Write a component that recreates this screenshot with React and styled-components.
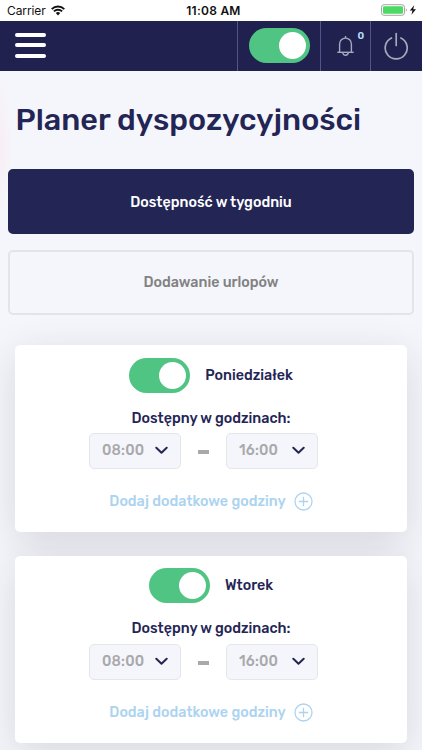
import React from 'react';
import styled, { createGlobalStyle } from 'styled-components';

const GlobalStyle = createGlobalStyle`
    * {
        box-sizing: border-box;
    }
    body {
        margin: 0;
        background: #f5f6fb;
        font-family: Rubik, Roboto, sans-serif;
        font-size: 14.3px;
        font-weight: 500;
        color: #232555;
    }
    button {
        font: inherit;
        padding: 0;
        border: none;
        background: none;
    }`;

const Page = styled.div`
    height: 750px;
    overflow: hidden;
    background: radial-gradient(ellipse 12px 75px at 0 146px, #f8eef4, #f5f6fb);`;

const StatusBar = styled.div`
    display: grid;
    grid-template-columns: 1fr auto 1fr;
    align-items: center;
    height: 20.5px;
    padding: 0 5px 0 7px;
    background: white;
    color: #111;
    font-family: Inter, sans-serif;
    font-size: 12px;
    font-weight: 400;`;

const Carrier = styled.div`
    display: flex;
    align-items: center;
    gap: 5px;
    letter-spacing: -0.1px;`;

const Clock = styled.div`
    padding-left: 3px;
    font-weight: 600;
    letter-spacing: 0.25px;`;

const Power = styled.div`
    display: flex;
    align-items: center;
    justify-content: flex-end;`;

const Header = styled.header`
    display: flex;
    height: 50.8px;
    background: #20214f;`;

const MenuButton = styled.button`
    display: flex;
    flex-direction: column;
    justify-content: space-between;
    width: 31px;
    height: 24.5px;
    margin: 12.5px auto 0 15.4px;`;

const MenuLine = styled.span`
    height: 3.6px;
    border-radius: 2px;
    background: white;`;

const HeaderCell = styled.div`
    display: flex;
    align-items: center;
    justify-content: center;
    width: ${props => props.$width}px;
    border-left: 1px solid #53548a;`;

const Bell = styled.div`
    position: relative;
    height: 22px;`;

const Badge = styled.span`
    position: absolute;
    top: -5px;
    left: 21px;
    color: #b5dcf8;
    font-size: 10px;
    font-weight: 600;
    line-height: 12px;`;

const Switch = styled.button`
    display: flex;
    align-items: center;
    justify-content: flex-end;
    width: 61px;
    height: 35px;
    padding-right: 4px;
    border-radius: 18px;
    background: #50c583;`;

const Knob = styled.span`
    width: 27px;
    height: 27px;
    border-radius: 50%;
    background: white;`;

const Title = styled.h1`
    margin: 29.7px 0 0 15.5px;
    font-size: 30.6px;
    font-weight: 500;
    line-height: 38px;
    white-space: nowrap;`;

const Tabs = styled.div`
    display: flex;
    flex-direction: column;
    gap: 15.5px;
    padding: 30.2px 8px 0;`;

const Tab = styled.button`
    height: 65px;
    padding-top: 1px;
    border-radius: 5px;
    border: 2px solid ${props => props.$active ? '#232555' : '#e3e4e8'};
    background: ${props => props.$active ? '#232555' : 'transparent'};
    color: ${props => props.$active ? 'white' : '#818181'};`;

const Days = styled.div`
    display: flex;
    flex-direction: column;
    gap: 24px;
    padding: 30.6px 15.4px 0;`;

const Card = styled.section`
    display: flex;
    flex-direction: column;
    align-items: center;
    height: 186.7px;
    padding-top: 12.4px;
    border-radius: 5px;
    background: white;
    box-shadow: 0 10px 40px rgba(35, 37, 45, 0.14);`;

const DayRow = styled.div`
    display: flex;
    align-items: center;
    gap: 15px;`;

const DayName = styled.h3`
    margin: 0;
    font-size: inherit;
    font-weight: 500;`;

const Label = styled.p`
    margin: 16px 0 0;
    line-height: 20px;`;

const Hours = styled.div`
    display: flex;
    align-items: center;
    margin: 4.3px 16px 0 0;`;

const Select = styled.button`
    display: flex;
    align-items: center;
    justify-content: space-between;
    width: 92px;
    height: 36px;
    padding: 0 12px 0 12.5px;
    border: 1px solid #e5e6ea;
    border-radius: 5px;
    background: #f5f6fb;
    color: #a9a9ab;
    letter-spacing: 0.15px;`;

const Dash = styled.span`
    width: 11px;
    height: 4px;
    margin: 2px 17px 0;
    background: #a9a9ab;`;

const AddButton = styled.button`
    display: flex;
    align-items: center;
    gap: 8px;
    margin-top: 23.3px;
    color: #acd3f0;`;

const WifiIcon = () => (
    <svg width="14" height="11" viewBox="0 0 14 11" fill="none" stroke="#111" strokeWidth="1.9">
        <path d="M0.7 4.1a9 9 0 0 1 12.6 0" />
        <path d="M2.9 6.4a5.8 5.8 0 0 1 8.2 0" />
        <path d="M4.8 8.1a3.2 3.2 0 0 1 4.4 0L7 10.4z" fill="#111" stroke="none" />
    </svg>
);

const BatteryIcon = () => (
    <svg width="36" height="12" viewBox="0 0 36 12">
        <rect x="0.5" y="0.7" width="23" height="10.6" rx="2.6" fill="none" stroke="#a5a5a5" />
        <rect x="2" y="2.2" width="20" height="7.6" rx="1.3" fill="#4cd964" />
        <path d="M24.8 4.2c1.3.5 1.3 3.1 0 3.6z" fill="#a5a5a5" />
        <path d="M33.2 1.2l-4.4 5.4h2.7l-1.1 4.2 4.6-5.6h-2.8z" fill="#111" />
    </svg>
);

const BellIcon = () => (
    <svg width="18" height="22" viewBox="0 0 18 22" fill="none" stroke="#a7a8bc" strokeWidth="1.4">
        <path d="M8.5 1v2" />
        <path d="M2.6 17.3V9a5.9 5.9 0 0 1 11.8 0v8.3" />
        <path d="M0.3 17.3h16.4" />
        <path d="M5.8 17.6a2.7 2.7 0 0 0 5.4 0" />
    </svg>
);

const PowerIcon = () => (
    <svg width="26" height="28" viewBox="0 0 26 28" fill="none" stroke="#a7a8bc" strokeWidth="1.7" strokeLinecap="round">
        <path d="M12.2 1.5v12" />
        <path d="M7.5 6A11 11 0 1 0 16.9 6" />
    </svg>
);

const Chevron = () => (
    <svg width="13" height="9" viewBox="0 0 13 9" fill="none" stroke="#232555" strokeWidth="2" strokeLinecap="round" strokeLinejoin="round">
        <path d="M1.3 1.8l5.2 5 5.2-5" />
    </svg>
);

const PlusIcon = () => (
    <svg width="19" height="19" viewBox="0 0 19 19" fill="none" stroke="#acd3f0" strokeWidth="1.3">
        <circle cx="9.5" cy="9.5" r="8.5" />
        <path d="M9.5 4.8v9.4M4.8 9.5h9.4" />
    </svg>
);

const Toggle = () => <Switch><Knob /></Switch>;

const DayCard = (props) => {
    return (
        <Card>
            <DayRow>
                <Toggle />
                <DayName>{props.name}</DayName>
            </DayRow>
            <Label>Dostępny w godzinach:</Label>
            <Hours>
                <Select>{props.from}<Chevron /></Select>
                <Dash />
                <Select>{props.to}<Chevron /></Select>
            </Hours>
            <AddButton>Dodaj dodatkowe godziny<PlusIcon /></AddButton>
        </Card>
    )
}

const App = () => {
    return (
        <>
            <GlobalStyle />
            <Page>
                <StatusBar>
                    <Carrier>Carrier<WifiIcon /></Carrier>
                    <Clock>11:08 AM</Clock>
                    <Power><BatteryIcon /></Power>
                </StatusBar>
                <Header>
                    <MenuButton><MenuLine /><MenuLine /><MenuLine /></MenuButton>
                    <HeaderCell $width={83}><Toggle /></HeaderCell>
                    <HeaderCell $width={50}>
                        <Bell><BellIcon /><Badge>0</Badge></Bell>
                    </HeaderCell>
                    <HeaderCell $width={52}><PowerIcon /></HeaderCell>
                </Header>
                <Title>Planer dyspozycyjności</Title>
                <Tabs>
                    <Tab $active>Dostępność w tygodniu</Tab>
                    <Tab>Dodawanie urlopów</Tab>
                </Tabs>
                <Days>
                    <DayCard name="Poniedziałek" from="08:00" to="16:00" />
                    <DayCard name="Wtorek" from="08:00" to="16:00" />
                </Days>
            </Page>
        </>
    )
}


export default App;
